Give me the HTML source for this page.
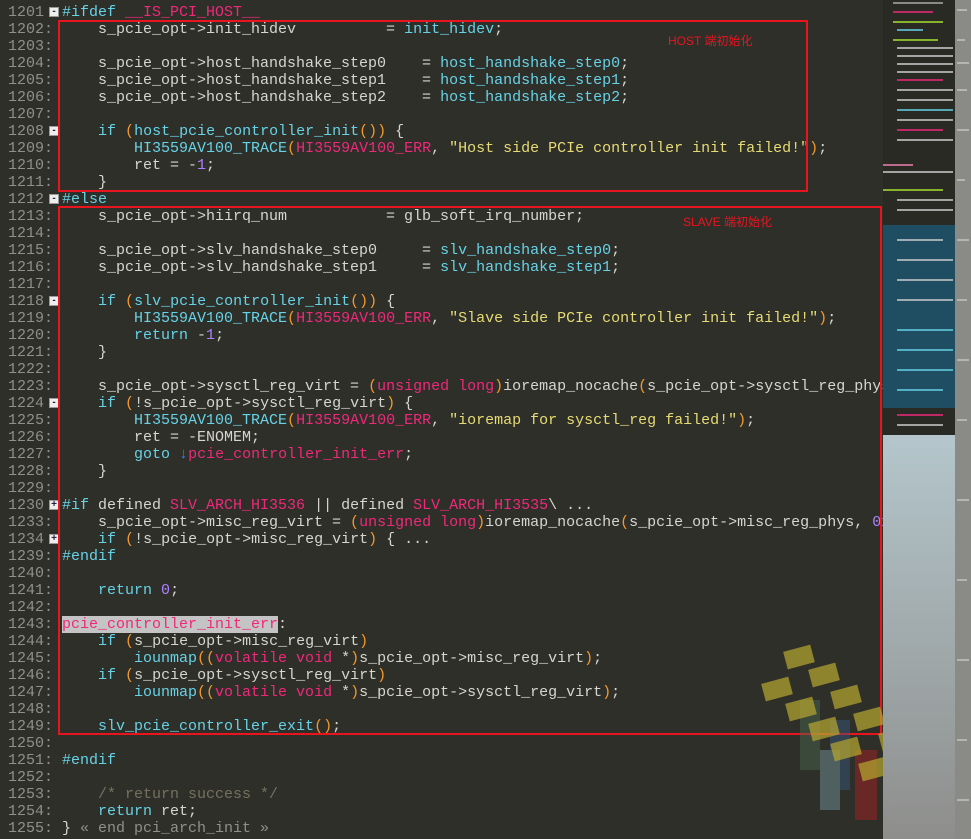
<!DOCTYPE html>
<html><head><meta charset="utf-8"><style>
html,body{margin:0;padding:0;background:#2f2f2a;width:971px;height:839px;overflow:hidden;position:relative;font-family:"Liberation Mono",monospace;}
#code{position:absolute;left:0;top:1px;width:883px;height:839px;overflow:hidden;}
.r{position:absolute;left:0;height:17px;line-height:17px;font-size:15px;white-space:pre;color:#d6d6ce;}
.n{position:absolute;left:8px;width:45px;color:#8f908a;}
.t{position:absolute;left:62px;}
.c{color:#66d2e6}.p{color:#f0287a}.o{color:#f4982a}.v{color:#ae81ff}.s{color:#e6db74}.m{color:#75715e}.g{color:#8f908a}
.hl{background:#c4c4c4}
.f{position:absolute;left:49px;width:8px;height:8px;background:#eee;border:1px solid #999;box-shadow:-2px 0 0 #2f2f2a;font-size:10px;line-height:8px;text-align:center;color:#224;font-family:"Liberation Sans",sans-serif;font-weight:bold;}
.box{position:absolute;border:2px solid #e8141e;}
.lbl{position:absolute;color:#e8141e;font:12px "Liberation Sans","Noto Sans CJK SC",sans-serif;}
#mm{position:absolute;left:883px;top:0;width:72px;height:839px;background:#2a2a25;}
#sb{position:absolute;left:955px;top:0;width:16px;height:839px;background:#8a8a86;}
</style></head><body>
<div id="code">
<div class="r" style="top:3px"><span class="n">1201:</span><span class="t"><span class="c">#ifdef</span> <span class="p">__IS_PCI_HOST__</span></span></div>
<div class="r" style="top:20px"><span class="n">1202:</span><span class="t">    s_pcie_opt->init_hidev          = <span class="c">init_hidev</span>;</span></div>
<div class="r" style="top:37px"><span class="n">1203:</span></div>
<div class="r" style="top:54px"><span class="n">1204:</span><span class="t">    s_pcie_opt->host_handshake_step0    = <span class="c">host_handshake_step0</span>;</span></div>
<div class="r" style="top:71px"><span class="n">1205:</span><span class="t">    s_pcie_opt->host_handshake_step1    = <span class="c">host_handshake_step1</span>;</span></div>
<div class="r" style="top:88px"><span class="n">1206:</span><span class="t">    s_pcie_opt->host_handshake_step2    = <span class="c">host_handshake_step2</span>;</span></div>
<div class="r" style="top:105px"><span class="n">1207:</span></div>
<div class="r" style="top:122px"><span class="n">1208:</span><span class="t">    <span class="c">if</span> <span class="o">(</span><span class="c">host_pcie_controller_init</span><span class="o">())</span> {</span></div>
<div class="r" style="top:139px"><span class="n">1209:</span><span class="t">        <span class="c">HI3559AV100_TRACE</span><span class="o">(</span><span class="p">HI3559AV100_ERR</span>, <span class="s">"Host side PCIe controller init failed!"</span><span class="o">)</span>;</span></div>
<div class="r" style="top:156px"><span class="n">1210:</span><span class="t">        ret = -<span class="v">1</span>;</span></div>
<div class="r" style="top:173px"><span class="n">1211:</span><span class="t">    }</span></div>
<div class="r" style="top:190px"><span class="n">1212:</span><span class="t"><span class="c">#else</span></span></div>
<div class="r" style="top:207px"><span class="n">1213:</span><span class="t">    s_pcie_opt->hiirq_num           = glb_soft_irq_number;</span></div>
<div class="r" style="top:224px"><span class="n">1214:</span></div>
<div class="r" style="top:241px"><span class="n">1215:</span><span class="t">    s_pcie_opt->slv_handshake_step0     = <span class="c">slv_handshake_step0</span>;</span></div>
<div class="r" style="top:258px"><span class="n">1216:</span><span class="t">    s_pcie_opt->slv_handshake_step1     = <span class="c">slv_handshake_step1</span>;</span></div>
<div class="r" style="top:275px"><span class="n">1217:</span></div>
<div class="r" style="top:292px"><span class="n">1218:</span><span class="t">    <span class="c">if</span> <span class="o">(</span><span class="c">slv_pcie_controller_init</span><span class="o">())</span> {</span></div>
<div class="r" style="top:309px"><span class="n">1219:</span><span class="t">        <span class="c">HI3559AV100_TRACE</span><span class="o">(</span><span class="p">HI3559AV100_ERR</span>, <span class="s">"Slave side PCIe controller init failed!"</span><span class="o">)</span>;</span></div>
<div class="r" style="top:326px"><span class="n">1220:</span><span class="t">        <span class="c">return</span> -<span class="v">1</span>;</span></div>
<div class="r" style="top:343px"><span class="n">1221:</span><span class="t">    }</span></div>
<div class="r" style="top:360px"><span class="n">1222:</span></div>
<div class="r" style="top:377px"><span class="n">1223:</span><span class="t">    s_pcie_opt->sysctl_reg_virt = <span class="o">(</span><span class="p">unsigned long</span><span class="o">)</span>ioremap_nocache<span class="o">(</span>s_pcie_opt->sysctl_reg_phys</span></div>
<div class="r" style="top:394px"><span class="n">1224:</span><span class="t">    <span class="c">if</span> <span class="o">(</span>!s_pcie_opt->sysctl_reg_virt<span class="o">)</span> {</span></div>
<div class="r" style="top:411px"><span class="n">1225:</span><span class="t">        <span class="c">HI3559AV100_TRACE</span><span class="o">(</span><span class="p">HI3559AV100_ERR</span>, <span class="s">"ioremap for sysctl_reg failed!"</span><span class="o">)</span>;</span></div>
<div class="r" style="top:428px"><span class="n">1226:</span><span class="t">        ret = -ENOMEM;</span></div>
<div class="r" style="top:445px"><span class="n">1227:</span><span class="t">        <span class="c">goto</span> <span style="color:#3a7dff">↓</span><span class="p">pcie_controller_init_err</span>;</span></div>
<div class="r" style="top:462px"><span class="n">1228:</span><span class="t">    }</span></div>
<div class="r" style="top:479px"><span class="n">1229:</span></div>
<div class="r" style="top:496px"><span class="n">1230:</span><span class="t"><span class="c">#if</span> defined <span class="p">SLV_ARCH_HI3536</span> || defined <span class="p">SLV_ARCH_HI3535</span>\ ...</span></div>
<div class="r" style="top:513px"><span class="n">1233:</span><span class="t">    s_pcie_opt->misc_reg_virt = <span class="o">(</span><span class="p">unsigned long</span><span class="o">)</span>ioremap_nocache<span class="o">(</span>s_pcie_opt->misc_reg_phys, <span class="v">0x</span></span></div>
<div class="r" style="top:530px"><span class="n">1234:</span><span class="t">    <span class="c">if</span> <span class="o">(</span>!s_pcie_opt->misc_reg_virt<span class="o">)</span> { ...</span></div>
<div class="r" style="top:547px"><span class="n">1239:</span><span class="t"><span class="c">#endif</span></span></div>
<div class="r" style="top:564px"><span class="n">1240:</span></div>
<div class="r" style="top:581px"><span class="n">1241:</span><span class="t">    <span class="c">return</span> <span class="v">0</span>;</span></div>
<div class="r" style="top:598px"><span class="n">1242:</span></div>
<div class="r" style="top:615px"><span class="n">1243:</span><span class="t"><span class="p hl">pcie_controller_init_err</span>:</span></div>
<div class="r" style="top:632px"><span class="n">1244:</span><span class="t">    <span class="c">if</span> <span class="o">(</span>s_pcie_opt->misc_reg_virt<span class="o">)</span></span></div>
<div class="r" style="top:649px"><span class="n">1245:</span><span class="t">        <span class="c">iounmap</span><span class="o">((</span><span class="p">volatile void</span> *<span class="o">)</span>s_pcie_opt->misc_reg_virt<span class="o">)</span>;</span></div>
<div class="r" style="top:666px"><span class="n">1246:</span><span class="t">    <span class="c">if</span> <span class="o">(</span>s_pcie_opt->sysctl_reg_virt<span class="o">)</span></span></div>
<div class="r" style="top:683px"><span class="n">1247:</span><span class="t">        <span class="c">iounmap</span><span class="o">((</span><span class="p">volatile void</span> *<span class="o">)</span>s_pcie_opt->sysctl_reg_virt<span class="o">)</span>;</span></div>
<div class="r" style="top:700px"><span class="n">1248:</span></div>
<div class="r" style="top:717px"><span class="n">1249:</span><span class="t">    <span class="c">slv_pcie_controller_exit</span><span class="o">()</span>;</span></div>
<div class="r" style="top:734px"><span class="n">1250:</span></div>
<div class="r" style="top:751px"><span class="n">1251:</span><span class="t"><span class="c">#endif</span></span></div>
<div class="r" style="top:768px"><span class="n">1252:</span></div>
<div class="r" style="top:785px"><span class="n">1253:</span><span class="t">    <span class="m">/* return success */</span></span></div>
<div class="r" style="top:802px"><span class="n">1254:</span><span class="t">    <span class="c">return</span> ret;</span></div>
<div class="r" style="top:819px"><span class="n">1255:</span><span class="t">} <span class="g">« end pci_arch_init »</span></span></div>

<div class="f" style="top:6px">-</div>
<div class="f" style="top:125px">-</div>
<div class="f" style="top:193px">-</div>
<div class="f" style="top:295px">-</div>
<div class="f" style="top:397px">-</div>
<div class="f" style="top:499px">+</div>
<div class="f" style="top:533px">+</div>
</div>

<div class="box" style="left:58px;top:20px;width:746px;height:168px;"></div>
<div class="box" style="left:58px;top:206px;width:820px;height:525px;"></div>
<div class="lbl" style="left:668px;top:32px">HOST 端初始化</div>
<div class="lbl" style="left:683px;top:213px">SLAVE 端初始化</div>

<svg style="position:absolute;left:760px;top:640px" width="211" height="199">
<g opacity="0.45">
<rect x="40" y="60" width="20" height="70" fill="#4a6a50"/><rect x="70" y="80" width="20" height="70" fill="#3a5a80"/>
<rect x="95" y="110" width="22" height="70" fill="#b02020"/><rect x="60" y="110" width="20" height="60" fill="#7a9aa0"/>
<rect x="125" y="130" width="20" height="60" fill="#5a6a80"/><rect x="160" y="150" width="20" height="45" fill="#6a7a7a"/>
</g>
<g fill="#b8a830" opacity="0.7">
<rect x="25" y="8" width="28" height="18" transform="rotate(-15 39 17)"/>
<rect x="50" y="26" width="28" height="18" transform="rotate(-15 64 35)"/>
<rect x="72" y="48" width="28" height="18" transform="rotate(-15 86 57)"/>
<rect x="95" y="70" width="28" height="18" transform="rotate(-15 109 79)"/>
<rect x="3" y="40" width="28" height="18" transform="rotate(-15 17 49)"/>
<rect x="27" y="60" width="28" height="18" transform="rotate(-15 41 69)"/>
<rect x="50" y="80" width="28" height="18" transform="rotate(-15 64 89)"/>
<rect x="72" y="100" width="28" height="18" transform="rotate(-15 86 109)"/>
<rect x="120" y="90" width="28" height="18" transform="rotate(-15 134 99)"/>
<rect x="145" y="110" width="28" height="18" transform="rotate(-15 159 119)"/>
<rect x="100" y="120" width="28" height="18" transform="rotate(-15 114 129)"/>
<rect x="125" y="140" width="28" height="18" transform="rotate(-15 139 149)"/>
</g>
</svg>

<div id="mm">
<div style="position:absolute;left:0;top:225px;width:72px;height:183px;background:#1f4e63;"></div>
<div style="position:absolute;left:0;top:435px;width:72px;height:404px;background:linear-gradient(#b4c6cc,#8e8e8c);"></div>
<svg style="position:absolute;left:0;top:0" width="72" height="435">
<g stroke-width="1.5">
<line x1="10" y1="3" x2="60" y2="3" stroke="#aaa"/><line x1="10" y1="12" x2="50" y2="12" stroke="#f0287a"/>
<line x1="10" y1="22" x2="60" y2="22" stroke="#a6e22e"/><line x1="14" y1="30" x2="40" y2="30" stroke="#66d2e6"/>
<line x1="10" y1="40" x2="55" y2="40" stroke="#a6e22e"/><line x1="14" y1="48" x2="70" y2="48" stroke="#ccc"/>
<line x1="14" y1="56" x2="70" y2="56" stroke="#ccc"/><line x1="14" y1="64" x2="70" y2="64" stroke="#ccc"/>
<line x1="14" y1="72" x2="70" y2="72" stroke="#ccc"/><line x1="14" y1="80" x2="60" y2="80" stroke="#f0287a"/>
<line x1="14" y1="90" x2="70" y2="90" stroke="#ccc"/><line x1="14" y1="100" x2="70" y2="100" stroke="#ccc"/>
<line x1="14" y1="110" x2="70" y2="110" stroke="#66d2e6"/><line x1="14" y1="120" x2="70" y2="120" stroke="#ccc"/>
<line x1="14" y1="130" x2="60" y2="130" stroke="#f0287a"/><line x1="14" y1="140" x2="70" y2="140" stroke="#ccc"/>
<line x1="0" y1="165" x2="30" y2="165" stroke="#f080b0"/><line x1="0" y1="172" x2="70" y2="172" stroke="#ccc"/>
<line x1="0" y1="190" x2="60" y2="190" stroke="#a6e22e"/><line x1="14" y1="200" x2="70" y2="200" stroke="#ccc"/>
<line x1="14" y1="210" x2="70" y2="210" stroke="#ccc"/>
<line x1="14" y1="240" x2="60" y2="240" stroke="#ccc"/><line x1="14" y1="260" x2="70" y2="260" stroke="#ccc"/>
<line x1="14" y1="280" x2="70" y2="280" stroke="#ccc"/><line x1="14" y1="300" x2="70" y2="300" stroke="#ccc"/>
<line x1="14" y1="330" x2="70" y2="330" stroke="#66d2e6"/><line x1="14" y1="350" x2="70" y2="350" stroke="#66d2e6"/>
<line x1="14" y1="370" x2="70" y2="370" stroke="#66d2e6"/><line x1="14" y1="390" x2="60" y2="390" stroke="#66d2e6"/>
<line x1="14" y1="415" x2="60" y2="415" stroke="#f0287a"/><line x1="14" y1="425" x2="60" y2="425" stroke="#ccc"/>
</g></svg>
</div>
<div id="sb">
<svg width="16" height="839"><g stroke="#e0e0e0" stroke-width="1">
<line x1="2" y1="10" x2="12" y2="10"/><line x1="2" y1="40" x2="10" y2="40"/><line x1="2" y1="63" x2="14" y2="63"/><line x1="2" y1="90" x2="12" y2="90"/>
<line x1="2" y1="130" x2="14" y2="130"/><line x1="2" y1="180" x2="10" y2="180"/><line x1="2" y1="240" x2="14" y2="240"/><line x1="2" y1="300" x2="12" y2="300"/>
<line x1="2" y1="360" x2="14" y2="360"/><line x1="2" y1="420" x2="12" y2="420"/><line x1="2" y1="500" x2="14" y2="500"/><line x1="2" y1="580" x2="12" y2="580"/>
<line x1="2" y1="660" x2="14" y2="660"/><line x1="2" y1="740" x2="12" y2="740"/><line x1="2" y1="800" x2="14" y2="800"/>
</g></svg>
</div>
</body></html>
